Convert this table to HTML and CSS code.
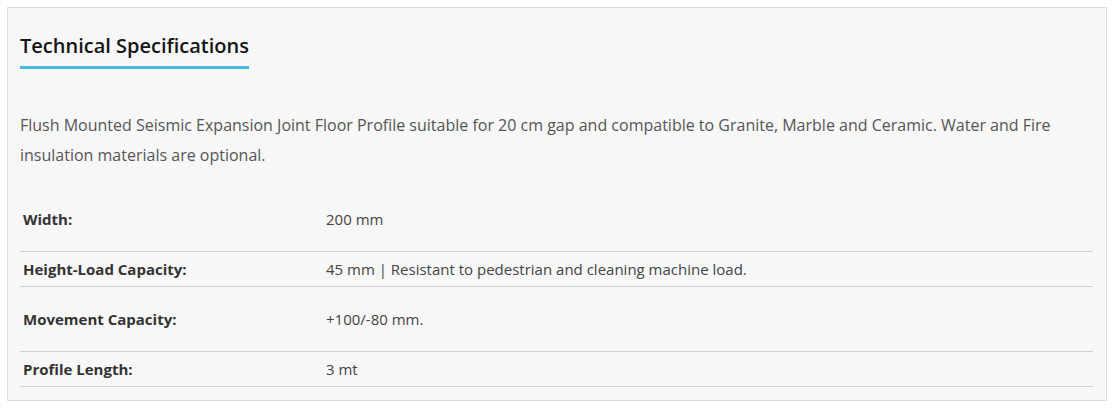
FILE: index.html
```html
<!DOCTYPE html>
<html>
<head>
<meta charset="utf-8">
<link rel="stylesheet" href="styles.css">
</head>
<body>
<section class="specs">
  <h2 class="specs-title"><span>Technical Specifications</span></h2>
  <p class="specs-desc">Flush Mounted Seismic Expansion Joint Floor Profile suitable for 20 cm gap and compatible to Granite, Marble and Ceramic. Water and Fire insulation materials are optional.</p>
  <div class="spec-table">
    <div class="spec-row tall"><div class="spec-label">Width:</div><div class="spec-value">200 mm</div></div>
    <div class="spec-row"><div class="spec-label">Height-Load Capacity:</div><div class="spec-value">45 mm | Resistant to pedestrian and cleaning machine load.</div></div>
    <div class="spec-row tall"><div class="spec-label">Movement Capacity:</div><div class="spec-value">+100/-80 mm.</div></div>
    <div class="spec-row"><div class="spec-label">Profile Length:</div><div class="spec-value">3 mt</div></div>
  </div>
</section>
</body>
</html>
```
FILE: styles.css
```css
html, body {
  margin: 0;
  padding: 0;
  background: #ffffff;
}
body {
  padding: 7px 10px 0 7px;
  font-family: "Open Sans", "Liberation Sans", sans-serif;
}
.specs {
  width: 1100px;
  height: 394px;
  box-sizing: border-box;
  background: #f7f7f7;
  border: 1px solid #dddddd;
  padding: 0 13px 0 12px;
}
.specs-title {
  margin: 0;
  padding-top: 25px;
  font-size: 20px;
  line-height: 26px;
  font-weight: 600;
  color: #151515;
}
.specs-title span {
  display: inline-block;
  padding-bottom: 7px;
  border-bottom: 3px solid #4ab9e3;
}
.specs-desc {
  margin: 41px 0 0;
  font-size: 16px;
  line-height: 30px;
  color: #555555;
}
.spec-table {
  margin-top: 17px;
}
.spec-row {
  display: grid;
  grid-template-columns: 303px 1fr;
  align-items: center;
  height: 35px;
  box-sizing: border-box;
  border-bottom: 1px solid #cfcfcf;
}
.spec-row.tall {
  height: 65px;
}
.spec-label,
.spec-value {
  padding-left: 3px;
  font-size: 15px;
  line-height: 20px;
}
.spec-label {
  font-weight: 700;
  color: #333333;
}
.spec-value {
  color: #444444;
}
```
